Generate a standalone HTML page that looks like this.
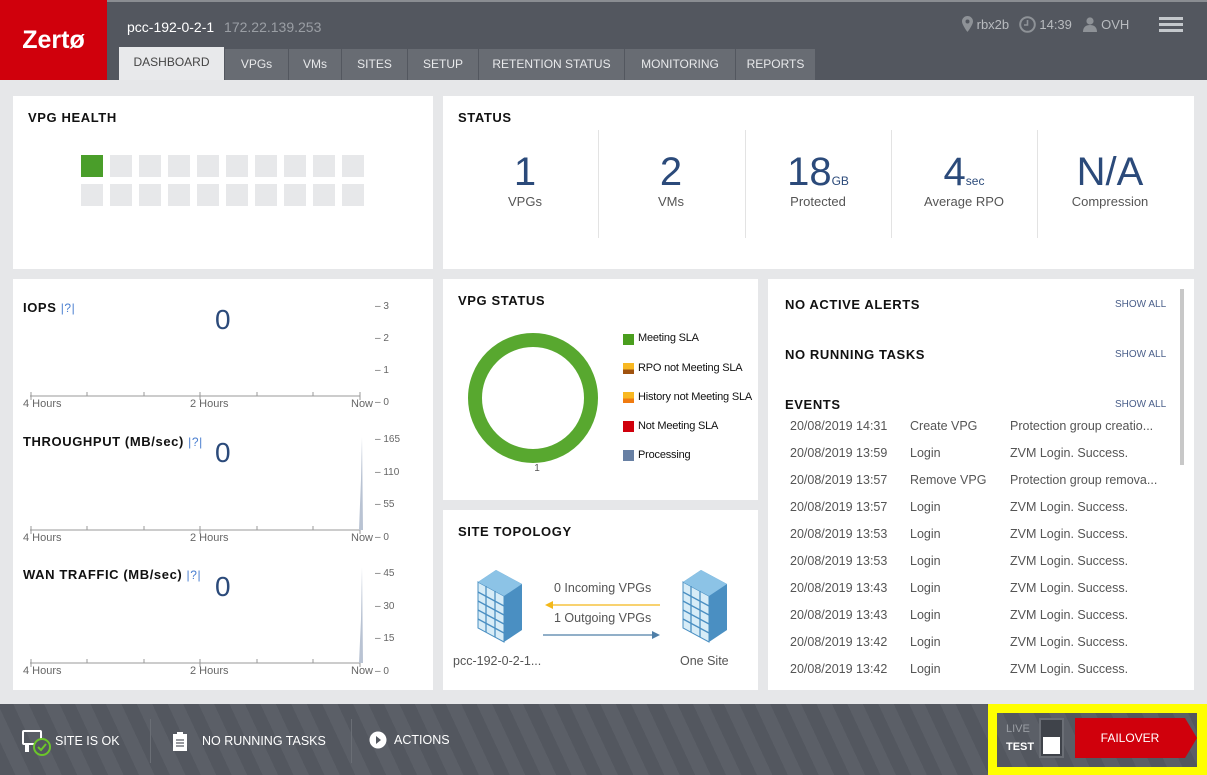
<!DOCTYPE html>
<html><head><meta charset="utf-8"><style>
*{margin:0;padding:0;box-sizing:border-box}
body{width:1207px;height:775px;overflow:hidden;background:#e6e7e9;font-family:"Liberation Sans",sans-serif;position:relative;color:#222}
.a{position:absolute}
.hdr{left:0;top:0;width:1207px;height:80px;background:#53575f;border-top:2px solid #8a8d92}
.logo{left:0;top:0;width:107px;height:80px;background:#d0000c;color:#fff;font-weight:bold;font-size:25px;line-height:80px;text-align:center}
.tab{top:49px;height:31px;background:#686c73;color:#e8e9eb;font-size:12px;line-height:31px;text-align:center;border-left:1px solid #53575f}
.tab.on{background:#e8e9eb;color:#444;top:47px;height:33px;line-height:31px}
.p{background:#fff}
.t{font-size:13px;font-weight:bold;letter-spacing:.6px;color:#111}
.sq{width:22px;height:22px;background:#e7e8ea}
.num{font-size:40px;color:#2b4a7a;text-align:center;width:146px}
.lab{font-size:13px;color:#555;text-align:center;width:146px}
.dv{width:1px;background:#e3e3e3;top:130px;height:108px}
.ax{font-size:10px;color:#666}
.xl{font-size:11px;color:#666}
.z{font-size:28px;color:#2b4a7a}
.q{color:#4a7fd0;font-weight:normal;font-size:12px}
.ev{font-size:12.5px;color:#555}
.sa{font-size:10px;color:#4a5f8a;left:1115px}
.ft{left:0;top:704px;width:1207px;height:71px;background:repeating-linear-gradient(65deg,#53575f 0 14px,#5b5f67 14px 28px)}
.fw{color:#fff;font-size:12.5px}
.leg{font-size:11px;color:#111;letter-spacing:-.2px}
.lb{width:11px;height:11px}
</style></head><body>
<div class="a hdr"></div>
<div class="a logo">Zertø</div>
<div class="a" style="left:127px;top:19px;color:#fff;font-size:14px">pcc-192-0-2-1 <span style="color:#9a9ea4;margin-left:6px">172.22.139.253</span></div>
<div class="a tab on" style="left:118px;width:106px">DASHBOARD</div>
<div class="a tab" style="left:224px;width:64px">VPGs</div>
<div class="a tab" style="left:288px;width:53px">VMs</div>
<div class="a tab" style="left:341px;width:66px">SITES</div>
<div class="a tab" style="left:407px;width:71px">SETUP</div>
<div class="a tab" style="left:478px;width:146px">RETENTION STATUS</div>
<div class="a tab" style="left:624px;width:111px">MONITORING</div>
<div class="a tab" style="left:735px;width:80px">REPORTS</div>
<div class="a" style="left:962px;top:16px;color:#b8bbbf;font-size:13px">
<svg width="11" height="16" viewBox="0 0 11 16" style="vertical-align:-3px"><path d="M5.5 0C2.5 0 0 2.4 0 5.4 0 9 5.5 16 5.5 16S11 9 11 5.4C11 2.4 8.5 0 5.5 0zm0 7.5a2 2 0 110-4 2 2 0 010 4z" fill="#8e9297"/></svg> rbx2b
<svg width="17" height="17" viewBox="0 0 17 17" style="vertical-align:-4px;margin-left:6px"><circle cx="8.5" cy="8.5" r="7.3" fill="none" stroke="#8e9297" stroke-width="2"/><path d="M8.5 4v5H5" fill="none" stroke="#8e9297" stroke-width="1.6"/></svg> 14:39
<svg width="16" height="16" viewBox="0 0 16 16" style="vertical-align:-3px;margin-left:6px"><circle cx="8" cy="5" r="3.6" fill="#8e9297"/><path d="M1 16c0-5 3-7 7-7s7 2 7 7z" fill="#8e9297"/></svg> OVH</div>
<div class="a" style="left:1159px;top:17px;width:24px;height:3px;background:#c4c8cc;box-shadow:0 6px 0 #c4c8cc,0 12px 0 #c4c8cc"></div>

<div class="a p" style="left:13px;top:96px;width:420px;height:173px"></div>
<div class="a t" style="left:28px;top:110px">VPG HEALTH</div>
<div class="a" style="left:81px;top:155px;width:290px;display:grid;grid-template-columns:repeat(10,22px);gap:7px">
<div class="sq" style="background:#4a9e2a"></div><div class="sq"></div><div class="sq"></div><div class="sq"></div><div class="sq"></div><div class="sq"></div><div class="sq"></div><div class="sq"></div><div class="sq"></div><div class="sq"></div>
<div class="sq"></div><div class="sq"></div><div class="sq"></div><div class="sq"></div><div class="sq"></div><div class="sq"></div><div class="sq"></div><div class="sq"></div><div class="sq"></div><div class="sq"></div></div>

<div class="a p" style="left:443px;top:96px;width:751px;height:173px"></div>
<div class="a t" style="left:458px;top:110px">STATUS</div>
<div class="a dv" style="left:598px"></div><div class="a dv" style="left:745px"></div><div class="a dv" style="left:891px"></div><div class="a dv" style="left:1037px"></div>
<div class="a num" style="left:452px;top:150px">1</div><div class="a lab" style="left:452px;top:194px">VPGs</div>
<div class="a num" style="left:598px;top:150px">2</div><div class="a lab" style="left:598px;top:194px">VMs</div>
<div class="a num" style="left:745px;top:150px">18<span style="font-size:12px">GB</span></div><div class="a lab" style="left:745px;top:194px">Protected</div>
<div class="a num" style="left:891px;top:150px">4<span style="font-size:12px">sec</span></div><div class="a lab" style="left:891px;top:194px">Average RPO</div>
<div class="a num" style="left:1037px;top:150px">N/A</div><div class="a lab" style="left:1037px;top:194px">Compression</div>

<div class="a p" style="left:13px;top:279px;width:420px;height:411px"></div>
<svg class="a" style="left:13px;top:279px" width="420" height="411">
<g stroke="#999" stroke-width="1">
<line x1="17" y1="117" x2="347" y2="117"/><line x1="17" y1="251" x2="347" y2="251"/><line x1="17" y1="384" x2="347" y2="384"/>
<g id="tk"><line x1="18" y1="113" x2="18" y2="121"/><line x1="74" y1="113" x2="74" y2="117"/><line x1="131" y1="113" x2="131" y2="117"/><line x1="187" y1="113" x2="187" y2="121"/><line x1="244" y1="113" x2="244" y2="117"/><line x1="300" y1="113" x2="300" y2="117"/><line x1="347" y1="113" x2="347" y2="121"/></g>
<use href="#tk" y="134"/><use href="#tk" y="267"/>
</g>
<path d="M346 251 L348 200 L349 158 L350 251Z" fill="#b9c3d3"/>
<path d="M346 384 L348 340 L349 288 L350 384Z" fill="#b9c3d3"/>
</svg>
<div class="a t" style="left:23px;top:300px">IOPS <span class="q">|?|</span></div>
<div class="a z" style="left:215px;top:304px">0</div>
<div class="a t" style="left:23px;top:434px">THROUGHPUT (MB/sec) <span class="q">|?|</span></div>
<div class="a z" style="left:215px;top:437px">0</div>
<div class="a t" style="left:23px;top:567px">WAN TRAFFIC (MB/sec) <span class="q">|?|</span></div>
<div class="a z" style="left:215px;top:571px">0</div>
<div class="a xl" style="left:23px;top:398px">4 Hours</div><div class="a xl" style="left:190px;top:398px">2 Hours</div><div class="a xl" style="left:351px;top:398px">Now</div>
<div class="a xl" style="left:23px;top:532px">4 Hours</div><div class="a xl" style="left:190px;top:532px">2 Hours</div><div class="a xl" style="left:351px;top:532px">Now</div>
<div class="a xl" style="left:23px;top:665px">4 Hours</div><div class="a xl" style="left:190px;top:665px">2 Hours</div><div class="a xl" style="left:351px;top:665px">Now</div>
<div class="a ax" style="left:375px;top:291px;line-height:32px">– 3<br>– 2<br>– 1<br>– 0</div>
<div class="a ax" style="left:375px;top:424px;line-height:32.5px">– 165<br>– 110<br>– 55<br>– 0</div>
<div class="a ax" style="left:375px;top:558px;line-height:32.5px">– 45<br>– 30<br>– 15<br>– 0</div>

<div class="a p" style="left:443px;top:279px;width:315px;height:221px"></div>
<div class="a t" style="left:458px;top:293px">VPG STATUS</div>
<svg class="a" style="left:443px;top:279px" width="315" height="221"><circle cx="90" cy="119" r="58" fill="none" stroke="#58a82f" stroke-width="14"/><text x="94" y="192" font-size="10" fill="#555" text-anchor="middle" font-family="Liberation Sans">1</text></svg>
<div class="a lb" style="left:623px;top:334px;background:#4a9e1e"></div><div class="a leg" style="left:638px;top:332px">Meeting SLA</div>
<div class="a lb" style="left:623px;top:363px;background:linear-gradient(#f8b822 60%,#a0520f 60%)"></div><div class="a leg" style="left:638px;top:362px">RPO not Meeting SLA</div>
<div class="a lb" style="left:623px;top:392px;background:linear-gradient(#f8b822 60%,#f07b10 60%)"></div><div class="a leg" style="left:638px;top:391px">History not Meeting SLA</div>
<div class="a lb" style="left:623px;top:421px;background:#d0000c"></div><div class="a leg" style="left:638px;top:420px">Not Meeting SLA</div>
<div class="a lb" style="left:623px;top:450px;background:#6880a4"></div><div class="a leg" style="left:638px;top:449px">Processing</div>

<div class="a p" style="left:443px;top:510px;width:315px;height:180px"></div>
<div class="a t" style="left:458px;top:524px">SITE TOPOLOGY</div>
<svg class="a" style="left:443px;top:510px" width="315" height="180">
<defs><g id="bld"><path d="M0 12 L18 0 L44 14 L44 60 L26 72 L0 58Z" fill="#4a8fc2"/><path d="M0 12 L26 26 L26 72 L0 58Z" fill="#d7ecf7" stroke="#4a8fc2"/><path d="M0 12 L18 0 L44 14 L26 26Z" fill="#8cc3e6"/>
<g stroke="#4a8fc2" stroke-width="1.3"><line x1="0" y1="22" x2="26" y2="36"/><line x1="0" y1="31" x2="26" y2="45"/><line x1="0" y1="40" x2="26" y2="54"/><line x1="0" y1="49" x2="26" y2="63"/><line x1="8" y1="16" x2="8" y2="62"/><line x1="17" y1="21" x2="17" y2="67"/></g></g></defs>
<use href="#bld" x="35" y="60"/><use href="#bld" x="240" y="60"/>
<line x1="108" y1="95" x2="217" y2="95" stroke="#f3b81a" stroke-width="1.3"/><path d="M102 95 L110 91 L110 99Z" fill="#f3b81a"/>
<line x1="100" y1="125" x2="210" y2="125" stroke="#4f7fa8" stroke-width="1.3"/><path d="M217 125 L209 121 L209 129Z" fill="#4f7fa8"/>
</svg>
<div class="a ev" style="left:554px;top:581px">0 Incoming VPGs</div>
<div class="a ev" style="left:554px;top:611px">1 Outgoing VPGs</div>
<div class="a ev" style="left:453px;top:654px">pcc-192-0-2-1...</div>
<div class="a ev" style="left:680px;top:654px">One Site</div>

<div class="a p" style="left:768px;top:279px;width:426px;height:411px"></div>
<div class="a" style="left:1180px;top:289px;width:4px;height:176px;background:#c8c8c8"></div>
<div class="a t" style="left:785px;top:297px">NO ACTIVE ALERTS</div><div class="a sa" style="top:299px">SHOW ALL</div>
<div class="a t" style="left:785px;top:347px">NO RUNNING TASKS</div><div class="a sa" style="top:349px">SHOW ALL</div>
<div class="a t" style="left:785px;top:397px">EVENTS</div><div class="a sa" style="top:399px">SHOW ALL</div>
<div class="a ev" style="left:790px;top:413px;line-height:27px">20/08/2019 14:31<br>20/08/2019 13:59<br>20/08/2019 13:57<br>20/08/2019 13:57<br>20/08/2019 13:53<br>20/08/2019 13:53<br>20/08/2019 13:43<br>20/08/2019 13:43<br>20/08/2019 13:42<br>20/08/2019 13:42</div>
<div class="a ev" style="left:910px;top:413px;line-height:27px">Create VPG<br>Login<br>Remove VPG<br>Login<br>Login<br>Login<br>Login<br>Login<br>Login<br>Login</div>
<div class="a ev" style="left:1010px;top:413px;line-height:27px">Protection group creatio...<br>ZVM Login. Success.<br>Protection group remova...<br>ZVM Login. Success.<br>ZVM Login. Success.<br>ZVM Login. Success.<br>ZVM Login. Success.<br>ZVM Login. Success.<br>ZVM Login. Success.<br>ZVM Login. Success.</div>

<div class="a ft"></div>
<svg class="a" style="left:22px;top:729px" width="32" height="28"><rect x="1" y="2" width="18" height="13" rx="1" fill="none" stroke="#fff" stroke-width="2"/><rect x="3" y="15" width="4" height="8" fill="#fff"/><circle cx="20" cy="18" r="8" fill="#53575f" stroke="#6cc62a" stroke-width="2"/><path d="M16 18 L19 21 L24 15" fill="none" stroke="#6cc62a" stroke-width="2"/></svg>
<div class="a fw" style="left:55px;top:734px">SITE IS OK</div>
<div class="a" style="left:150px;top:719px;width:1px;height:44px;background:#6a6e75"></div>
<svg class="a" style="left:172px;top:731px" width="16" height="20"><rect x="1" y="3" width="14" height="17" fill="#fff"/><rect x="5" y="1" width="6" height="4" fill="#fff"/><g stroke="#53575f" stroke-width="1.2"><line x1="4" y1="9" x2="12" y2="9"/><line x1="4" y1="12" x2="12" y2="12"/><line x1="4" y1="15" x2="12" y2="15"/></g></svg>
<div class="a fw" style="left:202px;top:734px">NO RUNNING TASKS</div>
<div class="a" style="left:351px;top:719px;width:1px;height:44px;background:#6a6e75"></div>
<svg class="a" style="left:369px;top:731px" width="18" height="18"><circle cx="9" cy="9" r="8.5" fill="#fff"/><path d="M7 5 L12 9 L7 13Z" fill="#53575f"/></svg>
<div class="a fw" style="left:394px;top:733px">ACTIONS</div>
<div class="a" style="left:988px;top:704px;width:219px;height:71px;background:#ffff00"></div>
<div class="a" style="left:997px;top:713px;width:200px;height:54px;background:repeating-linear-gradient(65deg,#53575f 0 14px,#5b5f67 14px 28px)"></div>
<div class="a" style="left:1006px;top:723px;font-size:11px;color:#9a9ea4">LIVE</div>
<div class="a" style="left:1006px;top:741px;font-size:11px;color:#fff;font-weight:bold">TEST</div>
<div class="a" style="left:1039px;top:718px;width:25px;height:40px;background:#3f434a;border:2px solid #6a6e75"></div>
<div class="a" style="left:1043px;top:737px;width:17px;height:17px;background:#fff"></div>
<div class="a" style="left:1075px;top:718px;width:110px;height:40px;background:#d0000c;color:#fff;font-size:12px;line-height:40px;text-align:center">FAILOVER</div>
<div class="a" style="left:1185px;top:718px;width:0;height:0;border-top:20px solid transparent;border-bottom:20px solid transparent;border-left:12px solid #d0000c"></div>
</body></html>
